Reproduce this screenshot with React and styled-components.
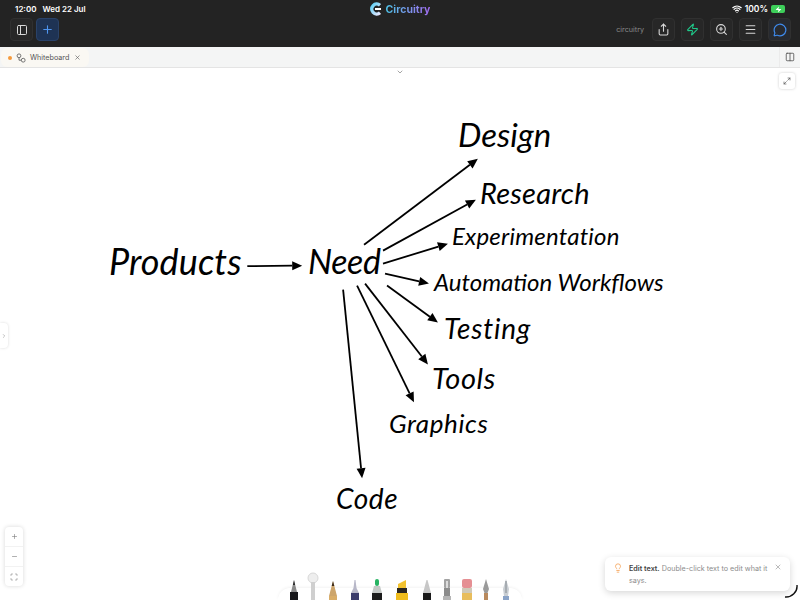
import styled, { createGlobalStyle } from "styled-components";
import {
  ChevronDown,
  ChevronRight,
  Columns2,
  Lightbulb,
  Maximize2,
  Menu,
  MessageCircle,
  Minus,
  PanelLeft,
  Plus,
  Scan,
  Share,
  Wifi,
  X,
  Zap,
  ZoomIn,
} from "lucide-react";

const GlobalStyle = createGlobalStyle`
  html, body, #root {
    margin: 0;
    height: 100%;
  }
  body {
    font-family: Inter, "Liberation Sans", sans-serif;
    background: #fff;
    overflow: hidden;
  }
`;

const labels = [
  { text: "Products", x: 109, y: 239, size: 36, spacing: 0.1 },
  { text: "Need", x: 308, y: 240, size: 34, spacing: -0.4 },
  { text: "Design", x: 458, y: 114, size: 33, spacing: 0 },
  { text: "Research", x: 480, y: 175, size: 29, spacing: 0.2 },
  { text: "Experimentation", x: 452, y: 221, size: 24, spacing: 0.2 },
  { text: "Automation Workflows", x: 434, y: 267, size: 24, spacing: 0 },
  { text: "Testing", x: 444, y: 311, size: 28, spacing: 0.8 },
  { text: "Tools", x: 432, y: 360, size: 29, spacing: 0.6 },
  { text: "Graphics", x: 389, y: 407, size: 26, spacing: 0.6 },
  { text: "Code", x: 336, y: 481, size: 28, spacing: 0.6 },
];

const arrows = [
  [247, 265.5, 302, 265],
  [364, 244, 478, 158],
  [383, 250, 476, 199],
  [383, 263, 448, 243],
  [385, 273, 429, 283],
  [387, 285, 438, 322],
  [365, 283, 428, 364],
  [357, 285, 414, 402],
  [343, 289, 362, 478],
];

const Arrow = ({ from, to }) => {
  const [x1, y1] = from;
  const [x2, y2] = to;
  const angle = Math.atan2(y2 - y1, x2 - x1);
  const len = 10;
  const wide = 4.5;
  const bx = x2 - Math.cos(angle) * len;
  const by = y2 - Math.sin(angle) * len;
  const px = -Math.sin(angle) * wide;
  const py = Math.cos(angle) * wide;
  return (
    <g>
      <line x1={x1} y1={y1} x2={bx} y2={by} stroke="#000" strokeWidth="1.8" />
      <polygon points={`${x2},${y2} ${bx + px},${by + py} ${bx - px},${by - py}`} fill="#000" />
    </g>
  );
};

const pens = [
  {
    slot: 20,
    d: (
      <>
        <path d="M10 2 L13 14 H7 Z" fill="#8a8a8a" />
        <path d="M10 2 L11 7 H9 Z" fill="#222" />
        <rect x="6" y="14" width="8" height="20" fill="#17171a" />
      </>
    ),
  },
  {
    slot: 18,
    lift: 8,
    d: (
      <>
        <circle cx="9" cy="8" r="5" fill="#eeeeee" stroke="#d8d8d8" />
        <rect x="7" y="12" width="4" height="24" fill="#cfcfcf" />
      </>
    ),
  },
  {
    slot: 22,
    d: (
      <>
        <path d="M11 3 L15 18 H7 Z" fill="#cda56b" />
        <path d="M11 3 L12.3 8 H9.7 Z" fill="#3a2a1a" />
        <rect x="7" y="18" width="8" height="16" fill="#d9ad68" />
      </>
    ),
  },
  {
    slot: 22,
    d: (
      <>
        <path d="M10.5 2 H11.5 L12.5 10 L15 15 H7 L9.5 10 Z" fill="#b7b7c8" />
        <rect x="7" y="15" width="8" height="19" fill="#3a3b6b" />
      </>
    ),
  },
  {
    slot: 22,
    d: (
      <>
        <rect x="9" y="1" width="4" height="7" rx="2" fill="#28b463" />
        <path d="M8 8 H14 L16 15 H6 Z" fill="#c4c8c6" />
        <rect x="6" y="15" width="10" height="19" fill="#1c1c1c" />
      </>
    ),
  },
  {
    slot: 28,
    d: (
      <>
        <path d="M10 6 L18 2 V10 H10 Z" fill="#f2c230" />
        <rect x="9" y="10" width="10" height="5" fill="#2a2620" />
        <rect x="8" y="15" width="12" height="19" fill="#f0bd1e" />
      </>
    ),
  },
  {
    slot: 22,
    d: (
      <>
        <path d="M10.5 2 H11.5 L15 15 H7 Z" fill="#c7c7c7" />
        <rect x="7" y="15" width="8" height="19" fill="#1a1a1a" />
      </>
    ),
  },
  {
    slot: 18,
    d: (
      <>
        <rect x="6" y="1" width="6" height="9" rx="1" fill="#a3a3a3" />
        <rect x="6" y="10" width="6" height="8" fill="#8c8c8c" />
        <rect x="8" y="3" width="2" height="7" fill="#dcdcdc" />
        <rect x="5" y="18" width="8" height="16" fill="#b5b5b5" />
      </>
    ),
  },
  {
    slot: 22,
    d: (
      <>
        <rect x="6" y="1" width="10" height="9" rx="2" fill="#e58f93" />
        <rect x="6" y="10" width="10" height="5" fill="#cfc9b8" />
        <rect x="6" y="15" width="10" height="19" fill="#e8bd5c" />
      </>
    ),
  },
  {
    slot: 16,
    d: (
      <>
        <path d="M8 1 L11 11 L9.5 15 H6.5 L5 11 Z" fill="#9a9a9a" />
        <rect x="6" y="15" width="4" height="19" fill="#b98a5e" />
      </>
    ),
  },
  {
    slot: 24,
    d: (
      <>
        <path d="M12 1 L15 11 L14 18 H10 L9 11 Z" fill="#c9ced3" />
        <rect x="9" y="18" width="6" height="16" fill="#8aa3c7" />
        <rect x="11.4" y="3" width="1.2" height="12" fill="#8f959b" />
      </>
    ),
  },
];

export default function App() {
  return (
    <Page>
      <GlobalStyle />
      <Header>
        <StatusBar>
          <Clock>
            <span>12:00</span>
            <span>Wed 22 Jul</span>
          </Clock>
          <Brand>
            <svg width="12" height="14" viewBox="0 0 12 14">
              <defs>
                <linearGradient id="logo" x1="0" y1="0" x2="1" y2="1">
                  <stop offset="0" stopColor="#5fd0f5" />
                  <stop offset="1" stopColor="#e8e8ff" />
                </linearGradient>
              </defs>
              <path
                d="M10 3.2 A5 5 0 1 0 10 10.8"
                fill="none"
                stroke="url(#logo)"
                strokeWidth="3.4"
              />
              <rect x="5" y="6" width="6" height="2" fill="#fff" />
            </svg>
            <BrandName>Circuitry</BrandName>
          </Brand>
          <Status>
            <Wifi size={10} strokeWidth={3} />
            <span>100%</span>
            <Battery>
              <Zap size={7} fill="#fff" strokeWidth={0} />
            </Battery>
          </Status>
        </StatusBar>
        <Toolbar>
          <ToolGroup $gap={3}>
            <ToolButton>
              <PanelLeft size={12} />
            </ToolButton>
            <ToolButton $variant="primary">
              <Plus size={13} />
            </ToolButton>
          </ToolGroup>
          <ToolGroup $gap={6}>
            <WorkspaceName>circuitry</WorkspaceName>
            <ToolButton>
              <Share size={13} />
            </ToolButton>
            <ToolButton $variant="green">
              <Zap size={13} />
            </ToolButton>
            <ToolButton>
              <ZoomIn size={13} />
            </ToolButton>
            <ToolButton>
              <Menu size={13} />
            </ToolButton>
            <ToolButton $variant="chat">
              <MessageCircle size={14} />
            </ToolButton>
          </ToolGroup>
        </Toolbar>
      </Header>

      <TabBar>
        <Tab>
          <TabDot />
          <svg width="10" height="10" viewBox="0 0 10 10" fill="none" stroke="#666" strokeWidth="0.9">
            <circle cx="3" cy="2.8" r="1.9" />
            <circle cx="7.2" cy="7.2" r="1.9" />
            <path d="M3 4.7 V7.2 H5.3" />
          </svg>
          <TabName>Whiteboard</TabName>
          <X size={7} color="#555" />
        </Tab>
        <SplitButton>
          <Columns2 size={10} />
        </SplitButton>
      </TabBar>

      <Canvas>
        <Collapse>
          <ChevronDown size={8} />
        </Collapse>
        <ExpandButton>
          <Maximize2 size={8} />
        </ExpandButton>
        <SideHandle>
          <ChevronRight size={6} />
        </SideHandle>

        <ArrowLayer viewBox="0 0 800 533">
          <g transform="translate(0 -67)">
            {arrows.map(([x1, y1, x2, y2]) => (
              <Arrow key={`${x2}-${y2}`} from={[x1, y1]} to={[x2, y2]} />
            ))}
          </g>
        </ArrowLayer>
        {labels.map((l) => (
          <Label key={l.text} $x={l.x} $y={l.y - 67} $size={l.size} $spacing={l.spacing}>
            {l.text}
          </Label>
        ))}

        <ZoomControl>
          <ZoomButton>
            <Plus size={7} />
          </ZoomButton>
          <ZoomButton>
            <Minus size={7} />
          </ZoomButton>
          <ZoomButton>
            <Scan size={8} />
          </ZoomButton>
        </ZoomControl>

        <PenTray>
          {pens.map((p, i) => (
            <Pen
              key={i}
              $lift={p.lift || 0}
              width={p.slot}
              height="36"
              viewBox={`0 0 ${p.slot} 36`}
            >
              {p.d}
            </Pen>
          ))}
        </PenTray>

        <Toast>
          <Lightbulb size={10} color="#f5a55c" />
          <ToastText>
            <strong>Edit text.</strong> Double-click text to edit what it says.
          </ToastText>
          <ToastClose>
            <X size={8} />
          </ToastClose>
        </Toast>

        <ScreenCorner width="14" height="14" viewBox="0 0 14 14">
          <path d="M1 13 A11 11 0 0 0 13 1" fill="none" stroke="#111" strokeWidth="1.4" />
        </ScreenCorner>
      </Canvas>
    </Page>
  );
}

const Page = styled.div`
  width: 800px;
  height: 600px;
  display: flex;
  flex-direction: column;
  overflow: hidden;
`;

const Header = styled.header`
  height: 47px;
  background: #232323;
  color: #fff;
  display: flex;
  flex-direction: column;
  flex-shrink: 0;
`;

const StatusBar = styled.div`
  display: grid;
  grid-template-columns: 1fr auto 1fr;
  align-items: center;
  height: 18px;
  padding: 0 15px;
  font-size: 8px;
  font-weight: 600;
`;

const Clock = styled.div`
  display: flex;
  gap: 6px;
`;

const Brand = styled.div`
  display: flex;
  align-items: center;
  gap: 4px;
`;

const BrandName = styled.span`
  font-size: 10.5px;
  font-weight: 700;
  background: linear-gradient(90deg, #4fc3e8, #a16cf0);
  -webkit-background-clip: text;
  background-clip: text;
  color: transparent;
`;

const Status = styled.div`
  display: flex;
  align-items: center;
  justify-content: flex-end;
  gap: 3px;
  font-size: 8.5px;
`;

const Battery = styled.div`
  width: 14px;
  height: 8px;
  border-radius: 2px;
  background: #3ecf5a;
  display: flex;
  align-items: center;
  justify-content: center;
`;

const Toolbar = styled.div`
  display: flex;
  justify-content: space-between;
  padding: 0 9px 0 10px;
`;

const ToolGroup = styled.div`
  display: flex;
  align-items: center;
  gap: ${(p) => p.$gap}px;
`;

const toolColors = {
  primary: { fg: "#4f96f0", bg: "#1e3354", border: "#2a4268" },
  green: { fg: "#1fc98a", bg: "#272727", border: "#303030" },
  chat: { fg: "#3f8cf0", bg: "#272a30", border: "#303030" },
  default: { fg: "#d8d8d8", bg: "#272727", border: "#303030" },
};

const ToolButton = styled.button`
  width: 23px;
  height: 23px;
  padding: 0;
  border-radius: 4px;
  display: flex;
  align-items: center;
  justify-content: center;
  color: ${(p) => toolColors[p.$variant || "default"].fg};
  background: ${(p) => toolColors[p.$variant || "default"].bg};
  border: 1px solid ${(p) => toolColors[p.$variant || "default"].border};
`;

const WorkspaceName = styled.span`
  font-size: 7.2px;
  color: #8a8a8a;
  margin-right: 2px;
`;

const TabBar = styled.div`
  height: 21px;
  flex-shrink: 0;
  display: flex;
  justify-content: space-between;
  background: #f4f5f5;
  border-bottom: 1px solid #e4e4e4;
  box-sizing: border-box;
`;

const Tab = styled.div`
  display: flex;
  align-items: center;
  gap: 4px;
  width: 88px;
  box-sizing: border-box;
  margin: 1px 0 0 1px;
  padding: 0 8px 0 7px;
  border-radius: 6px;
  background: #faf8f3;
  color: #555;
`;

const TabDot = styled.span`
  width: 4px;
  height: 4px;
  border-radius: 50%;
  background: #f59a3c;
`;

const TabName = styled.span`
  font-size: 7.2px;
  flex: 1;
`;

const SplitButton = styled.div`
  width: 20px;
  display: flex;
  align-items: center;
  justify-content: center;
  color: #555;
  border-left: 1px solid #ebebeb;
`;

const Canvas = styled.main`
  position: relative;
  flex: 1;
  background: #fff;
`;

const Collapse = styled.div`
  position: absolute;
  top: 0;
  left: 396px;
  color: #777;
  display: flex;
`;

const ExpandButton = styled.div`
  position: absolute;
  top: 5px;
  right: 5px;
  width: 16px;
  height: 16px;
  border-radius: 3px;
  background: #fff;
  color: #555;
  display: flex;
  align-items: center;
  justify-content: center;
  box-shadow: 0 0 3px rgba(0, 0, 0, 0.2);
`;

const SideHandle = styled.div`
  position: absolute;
  top: 255px;
  left: 0;
  width: 8px;
  height: 25px;
  border-radius: 0 4px 4px 0;
  background: #fff;
  color: #888;
  display: flex;
  align-items: center;
  justify-content: center;
  box-shadow: 0 0 3px rgba(0, 0, 0, 0.15);
`;

const ArrowLayer = styled.svg`
  position: absolute;
  inset: 0;
  width: 100%;
  height: 100%;
`;

const Label = styled.div`
  position: absolute;
  left: ${(p) => p.$x}px;
  top: ${(p) => p.$y}px;
  font-family: Lato, "Open Sans", sans-serif;
  font-style: italic;
  font-weight: 400;
  font-size: ${(p) => p.$size}px;
  letter-spacing: ${(p) => p.$spacing}px;
  line-height: 1.2;
  white-space: nowrap;
  color: #000;
`;

const ZoomControl = styled.div`
  position: absolute;
  left: 5px;
  bottom: 14px;
  width: 18px;
  display: flex;
  flex-direction: column;
  background: #fff;
  border-radius: 4px;
  box-shadow: 0 0 4px rgba(0, 0, 0, 0.16);
`;

const ZoomButton = styled.div`
  height: 19px;
  display: flex;
  align-items: center;
  justify-content: center;
  color: #777;
  border-bottom: 1px solid #f2f2f2;
  &:last-child {
    border-bottom: 0;
  }
`;

const PenTray = styled.div`
  position: absolute;
  left: 278px;
  bottom: 0;
  width: 244px;
  height: 12px;
  box-sizing: border-box;
  padding-left: 6px;
  display: flex;
  align-items: flex-start;
  border-radius: 12px 12px 0 0;
  background: #fff;
  box-shadow: 0 -1px 3px rgba(0, 0, 0, 0.05);
`;

const Pen = styled.svg`
  flex-shrink: 0;
  margin-top: ${(p) => -10 - p.$lift}px;
`;

const Toast = styled.div`
  position: absolute;
  left: 605px;
  top: 489px;
  width: 185px;
  height: 34px;
  box-sizing: border-box;
  padding: 6px 8px;
  display: flex;
  gap: 6px;
  border-radius: 6px;
  background: #fff;
  box-shadow: 0 2px 7px rgba(0, 0, 0, 0.16);
`;

const ToastText = styled.div`
  flex: 1;
  font-size: 7.2px;
  line-height: 11.5px;
  color: #8c8c8c;
  strong {
    font-weight: 600;
    color: #444;
  }
`;

const ToastClose = styled.div`
  color: #999;
  display: flex;
  align-items: flex-start;
`;

const ScreenCorner = styled.svg`
  position: absolute;
  right: 2px;
  bottom: 2px;
`;
